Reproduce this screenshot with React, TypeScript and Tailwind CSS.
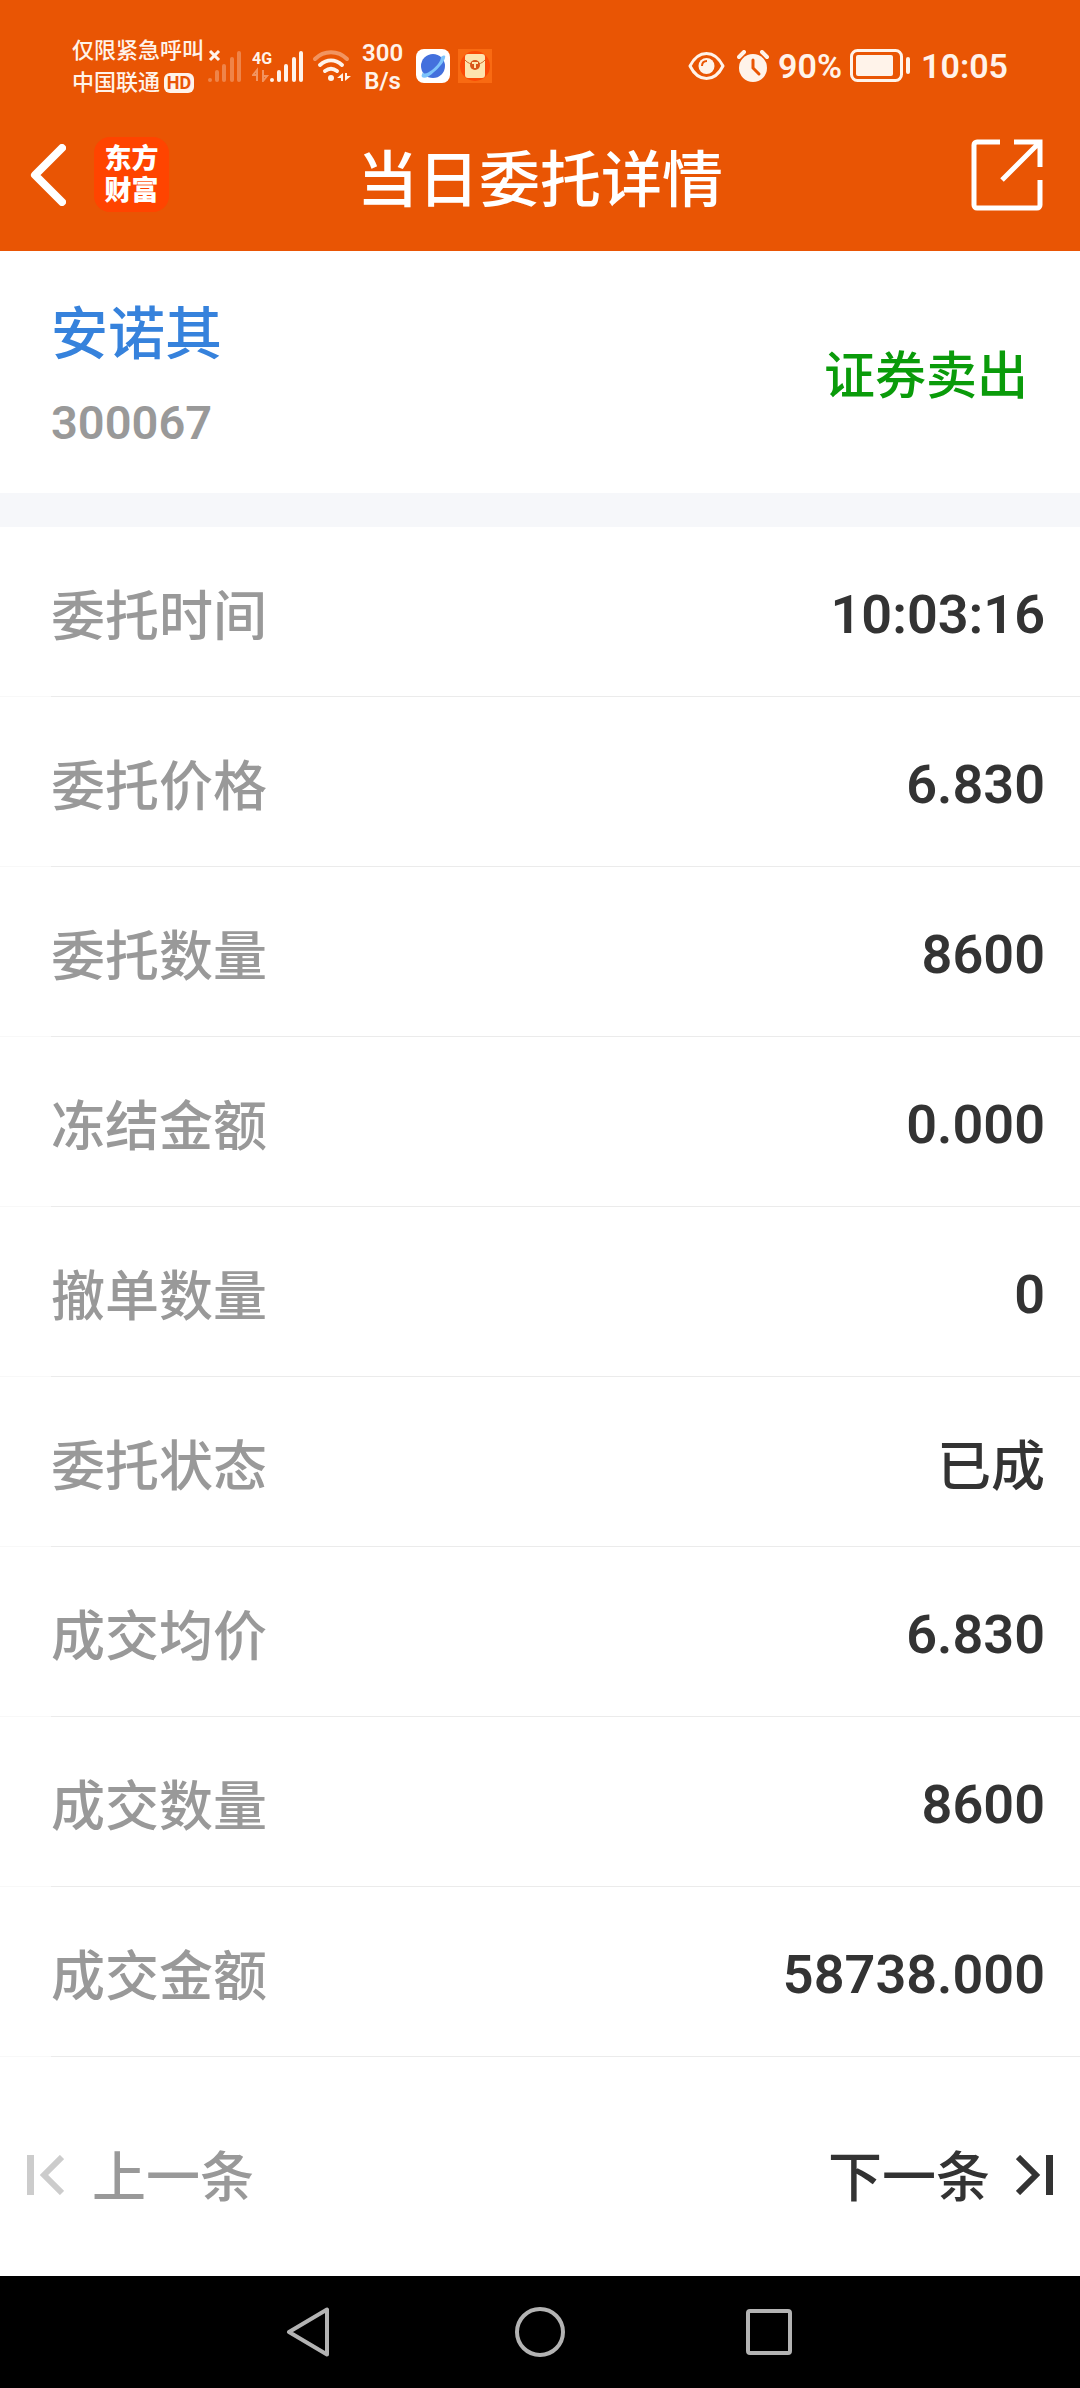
const details = [
  { label: "委托时间", value: "10:03:16" },
  { label: "委托价格", value: "6.830" },
  { label: "委托数量", value: "8600" },
  { label: "冻结金额", value: "0.000" },
  { label: "撤单数量", value: "0" },
  { label: "委托状态", value: "已成", isText: true },
  { label: "成交均价", value: "6.830" },
  { label: "成交数量", value: "8600" },
  { label: "成交金额", value: "58738.000" },
]

function SignalBars({ className }: { className?: string }) {
  return (
    <g className={className} strokeWidth="4" strokeLinecap="round">
      <path d="M2 30v0M9 30v-8M16 30V16M24 30V9M31 30V3" stroke="currentColor" />
    </g>
  )
}

function StatusBar() {
  return (
    <div className="flex h-[98px] items-center justify-between px-[72px] pt-[33px] text-[#fff3ea]">
      <div className="flex items-center">
        <div className="pt-0.5 text-[22px] leading-8">
          <p>仅限紧急呼叫</p>
          <p className="flex items-center gap-1">
            中国联通
            <span className="flex h-5 w-[30px] items-center justify-center rounded-md bg-[#fff3ea] text-lg font-bold text-[#e95504]">
              HD
            </span>
          </p>
        </div>

        {/* SIM 1, no service */}
        <svg className="ml-1 h-8 w-[34px]" viewBox="0 0 34 32" fill="none">
          <SignalBars className="opacity-30" />
          <path d="M2 1l9 9M11 1l-9 9" stroke="currentColor" strokeWidth="3" />
        </svg>

        {/* SIM 2 */}
        <svg className="ml-[10px] h-8 w-[52px]" viewBox="0 0 52 32" fill="none">
          <text x="0" y="14" fontSize="16" fontWeight="700" fill="currentColor">
            4G
          </text>
          <path
            d="M5 31V20l-4 5h4M11 20v11l4-5h-4"
            stroke="currentColor"
            strokeWidth="2"
            className="opacity-40"
          />
          <g transform="translate(18 0)">
            <SignalBars />
          </g>
        </svg>

        {/* Wifi */}
        <svg className="ml-2 h-8 w-10" viewBox="0 0 40 32" fill="none" stroke="currentColor" strokeLinecap="round">
          <path d="M3 9C12 0 26 0 35 9" strokeWidth="4" className="opacity-40" />
          <path d="M8 15c7-6 15-6 22 0" strokeWidth="4" />
          <path d="M13 21c4-3 8-3 12 0" strokeWidth="4" />
          <circle cx="19" cy="28" r="3" fill="currentColor" stroke="none" />
          <path d="M25 28l6-5v8h-2v-3zM33 23v8l6-5h-4v-3z" fill="currentColor" stroke="none" />
        </svg>

        <div className="ml-[10px] pt-0.5 text-center text-2xl font-semibold leading-7">
          <p>300</p>
          <p>B/s</p>
        </div>

        {/* Browser notification */}
        <svg className="ml-[13px] size-[34px]" viewBox="0 0 34 34" fill="none">
          <rect width="34" height="34" rx="8" fill="#fff" />
          <circle cx="17" cy="17" r="12" fill="#4370dd" />
          <path
            d="M25 8c3-2 5-2 4 1-1 4-6 10-11 14-5 5-10 7-12 5-1-1 0-3 1-5 1 3 5 1 9-2 5-4 9-9 9-13z"
            fill="#7dc4fb"
          />
        </svg>

        {/* Red packet notification */}
        <svg className="ml-2 size-[34px]" viewBox="0 0 34 34" fill="none">
          <rect width="34" height="34" fill="#f96a12" />
          <circle cx="17" cy="17" r="15" fill="#fa4a06" />
          <rect x="7" y="5" width="20" height="24" rx="3" fill="#fde3ae" />
          <path d="M7 11c5 6 15 6 20 0" stroke="#cf6a2e" strokeWidth="1" />
          <circle cx="17" cy="16" r="5" fill="#d9551c" />
          <path d="M14 14h6M17 14v5" stroke="#fde3ae" strokeWidth="2" />
        </svg>
      </div>

      <div className="flex items-center text-[34px] font-semibold leading-10">
        <svg className="h-8 w-[37px]" viewBox="0 0 37 32" fill="none">
          <path
            d="M2 16C6 8 12 3.500 18.500 3.500S31 8 35 16c-4 8-10 12.500-16.500 12.500S6 24 2 16z"
            stroke="currentColor"
            strokeWidth="3"
            strokeLinejoin="round"
          />
          <circle cx="18.500" cy="16" r="8" fill="currentColor" />
          <path d="M14 16c0-3 2-5 5-5" stroke="#e95504" strokeWidth="2" />
        </svg>
        <svg className="ml-3 h-8 w-8" viewBox="0 0 32 32" fill="none">
          <circle cx="16" cy="18" r="14" fill="currentColor" />
          <path d="M2 7l5-5M25 2l5 5" stroke="currentColor" strokeWidth="4" strokeLinecap="round" />
          <path d="M16 10v8l6 6" stroke="#e95504" strokeWidth="3" strokeLinecap="round" />
        </svg>
        <span className="ml-[9px]">90%</span>
        <svg className="ml-2 h-[33px] w-[61px]" viewBox="0 0 61 33" fill="none">
          <rect x="1.500" y="1.500" width="50" height="30" rx="6" stroke="currentColor" strokeWidth="3" />
          <rect x="6" y="6" width="37" height="21" rx="2" fill="currentColor" />
          <rect x="56" y="8" width="4" height="17" rx="2" fill="currentColor" />
        </svg>
        <span className="ml-[10px]">10:05</span>
      </div>
    </div>
  )
}

function TitleBar() {
  return (
    <div className="grid h-[153px] grid-cols-[1fr_auto_1fr] items-center text-white">
      <div className="flex items-center">
        <button type="button" aria-label="返回" className="pl-[30px]">
          <svg className="h-[62px] w-9" viewBox="0 0 36 62" fill="none">
            <path d="M32 4L5 31l27 27" stroke="currentColor" strokeWidth="8" strokeLinecap="round" strokeLinejoin="round" />
          </svg>
        </button>
        <div className="ml-7 flex size-[75px] items-center justify-center rounded-2xl bg-[#ff4400] text-[27px] font-black leading-8">
          <p>
            东方
            <br />
            财富
          </p>
        </div>
      </div>

      <h1 className="pt-3 text-[61px] font-medium leading-[80px]">当日委托详情</h1>

      <button type="button" aria-label="分享" className="justify-self-end pr-[37px]">
        <svg className="size-[72px]" viewBox="0 0 72 72" fill="none" stroke="currentColor" strokeWidth="5">
          <path d="M29 3H6a3 3 0 0 0-3 3v60a3 3 0 0 0 3 3h60a3 3 0 0 0 3-3V41" />
          <path d="M43 3h26v25M69 3L31 41" />
        </svg>
      </button>
    </div>
  )
}

function OrderPager() {
  return (
    <div className="flex h-[219px] items-center justify-between px-[27px] pt-4 text-[54px] leading-[72px]">
      <button type="button" disabled className="flex items-center gap-7 text-[#999999]">
        <svg className="h-10 w-[37px] text-[#cccccc]" viewBox="0 0 37 40" fill="none" stroke="currentColor">
          <path d="M3.500 0v40" strokeWidth="7" />
          <path d="M35 2L17 20l18 18" strokeWidth="6" />
        </svg>
        <span className="pt-2">上一条</span>
      </button>
      <button type="button" className="flex items-center gap-[26px] text-[#333333]">
        <span className="pt-2">下一条</span>
        <svg className="h-10 w-[37px]" viewBox="0 0 37 40" fill="none" stroke="currentColor">
          <path d="M33.500 0v40" strokeWidth="7" />
          <path d="M2 2l18 18L2 38" strokeWidth="6" />
        </svg>
      </button>
    </div>
  )
}

function NavigationBar() {
  const shapes = [
    { name: "后退", shape: <path d="M4 25L42 2.500v45z" /> },
    { name: "主屏幕", shape: <circle cx="25" cy="25" r="23" /> },
    { name: "最近任务", shape: <rect x="3" y="4" width="42" height="42" rx="2" /> },
  ]

  return (
    <nav className="flex h-28 items-center justify-center gap-[180px] bg-black text-[#b3b3b3]">
      {shapes.map((item) => (
        <button key={item.name} type="button" aria-label={item.name}>
          <svg className="size-[50px]" viewBox="0 0 50 50" fill="none" stroke="currentColor" strokeWidth="4" strokeLinejoin="round">
            {item.shape}
          </svg>
        </button>
      ))}
    </nav>
  )
}

export default function App() {
  return (
    <div className="min-h-screen bg-white font-['Roboto','Noto_Sans_CJK_SC',sans-serif] font-medium">
      <header className="bg-[#e95504]">
        <StatusBar />
        <TitleBar />
      </header>

      <main>
        {/* Stock */}
        <section className="flex h-[242px] items-center justify-between pl-[51px] pr-[52px] pt-[10px]">
          <div>
            <h2 className="text-[57px] leading-[80px] text-[#3682dc]">安诺其</h2>
            <p className="mt-3 text-[47px] font-semibold leading-[72px] text-[#999999]">300067</p>
          </div>
          <p className="text-[51px] leading-[72px] text-[#0a9b0a]">证券卖出</p>
        </section>

        <div className="h-[34px] bg-[#f6f7fa]" />

        {/* Order details */}
        <dl>
          {details.map((item) => (
            <div
              key={item.label}
              className="flex h-[170px] before:w-[51px] before:border-b before:border-[#f8f8f8]"
            >
              <div className="flex flex-1 items-center justify-between border-b border-[#ebebeb] pr-[35px] pt-1.5 text-[54px] leading-[72px]">
                <dt className="pt-1.5 text-[#999999]">{item.label}</dt>
                <dd className={item.isText ? "pt-1.5 text-[#333333]" : "font-semibold text-[#333333]"}>
                  {item.value}
                </dd>
              </div>
            </div>
          ))}
        </dl>

        <OrderPager />
      </main>

      <NavigationBar />
    </div>
  )
}
